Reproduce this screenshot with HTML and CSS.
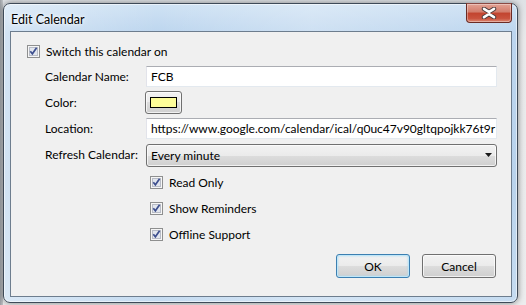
FILE: index.html
```html
<!DOCTYPE html>
<html>
<head>
<meta charset="utf-8">
<link rel="stylesheet" href="styles.css">
</head>
<body>
<div class="backdrop">
  <div class="window">
    <div class="titlebar">
      <span class="title">Edit Calendar</span>
      <div class="close-btn">
        <svg width="18" height="12" viewBox="0 0 18 12"><path d="M4 1.8 L9 5 L14 1.8 M4 10.2 L9 7 L14 10.2" stroke="#4a3a3a" stroke-width="4.4" fill="none" stroke-linecap="round"/><path d="M4 1.8 L9 5 L14 1.8 M4 10.2 L9 7 L14 10.2" stroke="#ffffff" stroke-width="2.6" fill="none" stroke-linecap="round"/></svg>
      </div>
    </div>
    <div class="client">
      <label class="check-row">
        <svg class="cb" width="13" height="13" viewBox="0 0 13 13"><rect x="0.5" y="0.5" width="12" height="12" fill="#f6f6f6" stroke="#8e8f8f"/><rect x="2.5" y="2.5" width="8" height="8" fill="#e2e6ee" stroke="#b8bcc6"/><path d="M3.3 6.2 L5.4 8.8 L9.6 2.8" stroke="#3d4f8e" stroke-width="1.7" fill="none"/></svg>
        <span>Switch this calendar on</span>
      </label>
      <div class="form">
        <div class="label">Calendar Name:</div>
        <div class="textbox">FCB</div>
        <div class="label">Color:</div>
        <div class="color-cell"><div class="btn color-btn"><span class="swatch"></span></div></div>
        <div class="label">Location:</div>
        <div class="textbox">https://www.google.com/calendar/ical/q0uc47v90gltqpojkk76t9r</div>
        <div class="label select-label">Refresh Calendar:</div>
        <div class="btn select">
          <span>Every minute</span>
          <svg width="7" height="4" viewBox="0 0 7 4"><path d="M0 0 H7 L3.5 4 Z" fill="#1a1a1a"/></svg>
        </div>
        <div></div>
        <div class="options">
          <label class="check-row">
            <svg class="cb" width="13" height="13" viewBox="0 0 13 13"><rect x="0.5" y="0.5" width="12" height="12" fill="#f6f6f6" stroke="#8e8f8f"/><rect x="2.5" y="2.5" width="8" height="8" fill="#e2e6ee" stroke="#b8bcc6"/><path d="M3.3 6.2 L5.4 8.8 L9.6 2.8" stroke="#3d4f8e" stroke-width="1.7" fill="none"/></svg>
            <span>Read Only</span>
          </label>
          <label class="check-row">
            <svg class="cb" width="13" height="13" viewBox="0 0 13 13"><rect x="0.5" y="0.5" width="12" height="12" fill="#f6f6f6" stroke="#8e8f8f"/><rect x="2.5" y="2.5" width="8" height="8" fill="#e2e6ee" stroke="#b8bcc6"/><path d="M3.3 6.2 L5.4 8.8 L9.6 2.8" stroke="#3d4f8e" stroke-width="1.7" fill="none"/></svg>
            <span>Show Reminders</span>
          </label>
          <label class="check-row">
            <svg class="cb" width="13" height="13" viewBox="0 0 13 13"><rect x="0.5" y="0.5" width="12" height="12" fill="#f6f6f6" stroke="#8e8f8f"/><rect x="2.5" y="2.5" width="8" height="8" fill="#e2e6ee" stroke="#b8bcc6"/><path d="M3.3 6.2 L5.4 8.8 L9.6 2.8" stroke="#3d4f8e" stroke-width="1.7" fill="none"/></svg>
            <span>Offline Support</span>
          </label>
        </div>
      </div>
      <div class="buttons">
        <div class="btn push default">OK</div>
        <div class="btn push">Cancel</div>
      </div>
    </div>
  </div>
</div>
</body>
</html>
```

FILE: styles.css
```css
* { box-sizing: border-box; }
html, body { margin: 0; padding: 0; }
body {
  width: 526px;
  height: 305px;
  overflow: hidden;
  background: #e6e7e8;
  font-family: Lato, "Noto Sans", sans-serif;
  font-size: 12px;
  color: #000;
}
.backdrop {
  padding: 3px 0 0 3px;
  height: 305px;
  background:
    linear-gradient(to right, #9a9ea3 0, #c4c7cb 3px, rgba(0,0,0,0) 3px),
    linear-gradient(to bottom, #dfe2e6 0, #e9eaeb 40px, #ecedee 100%);
}
.window {
  width: 515px;
  height: 300px;
  border: 1px solid #3e4a58;
  border-radius: 7px;
  padding: 0 5px 5px 6px;
  background:
    linear-gradient(to right, rgba(255,255,255,0.35) 0, rgba(255,255,255,0) 30%, rgba(255,255,255,0.25) 60%, rgba(255,255,255,0) 100%),
    linear-gradient(to bottom, #cfe2f4 0, #bcd5ee 30px, #b9d3ec 60%, #c6dcf1 100%);
  box-shadow: 0 0 6px rgba(0,0,0,0.45), inset 0 0 0 1px rgba(255,255,255,0.55);
  position: relative;
}
.titlebar {
  height: 27px;
  display: flex;
  align-items: center;
  padding-left: 1px;
  padding-top: 4px;
}
.title {
  color: #000;
  font-size: 12.5px;
  text-shadow: 0 0 6px #fff, 0 0 3px #fff;
}
.close-btn {
  position: absolute;
  top: -1px;
  right: 5px;
  width: 46px;
  height: 20px;
  border: 1px solid #6b2b24;
  border-top-color: #8a4a44;
  border-radius: 0 0 4px 4px;
  background: linear-gradient(to bottom, #e3a294 0, #d27c6b 45%, #c2442f 50%, #c9523d 80%, #dc8a74 100%);
  box-shadow: inset 0 0 0 1px rgba(255,255,255,0.35);
  display: flex;
  align-items: center;
  justify-content: center;
}
.client {
  width: 502px;
  height: 266px;
  border: 1px solid #6d7d8e;
  background: #f0f0f0;
  padding: 13px 15px 0 16px;
  display: flex;
  flex-direction: column;
}
.check-row {
  display: flex;
  align-items: center;
  gap: 6px;
  height: 13px;
  line-height: 13px;
}
.cb { flex: none; display: block; }
.form {
  margin-top: 8px;
  margin-left: 18px;
  display: grid;
  grid-template-columns: 101px 351px;
  grid-template-rows: 21px 23px 21px 23px auto;
  row-gap: 4px;
  align-items: center;
}
.label { padding-bottom: 1px; white-space: nowrap; }
.select-label { margin-top: 1px; }
.textbox {
  height: 21px;
  background: #fff;
  border: 1px solid #e3e9ef;
  border-top-color: #abadb3;
  border-left-color: #e2e3ea;
  padding: 0 4px;
  line-height: 19px;
  white-space: nowrap;
  overflow: hidden;
}
.color-cell { margin-left: -1px; }
.btn {
  border: 1px solid #707070;
  border-radius: 3px;
  background: linear-gradient(to bottom, #f2f2f2 0, #ebebeb 50%, #dddddd 50%, #cfcfcf 100%);
  box-shadow: inset 0 0 0 1px rgba(255,255,255,0.7);
}
.color-btn {
  width: 37px;
  height: 23px;
  display: flex;
  align-items: center;
  justify-content: center;
}
.swatch {
  width: 27px;
  height: 11px;
  background: #fdfd99;
  border: 1px solid #000;
}
.select {
  height: 23px;
  margin-top: 1px;
  display: flex;
  align-items: center;
  justify-content: space-between;
  padding: 0 3px 0 4px;
}
.select svg { display: block; margin-right: 1px; }
.options {
  margin-top: 6px;
  margin-left: 4px;
  display: flex;
  flex-direction: column;
  gap: 13px;
}
.buttons {
  margin-top: auto;
  margin-bottom: 18px;
  display: flex;
  justify-content: flex-end;
  gap: 12px;
}
.push {
  width: 74px;
  height: 24px;
  display: flex;
  align-items: center;
  justify-content: center;
}
.default {
  border-color: #3c7fb1;
  box-shadow: inset 0 0 0 1px #bfe6f8, inset 0 0 2px 1px #a6d8f0;
}
```
